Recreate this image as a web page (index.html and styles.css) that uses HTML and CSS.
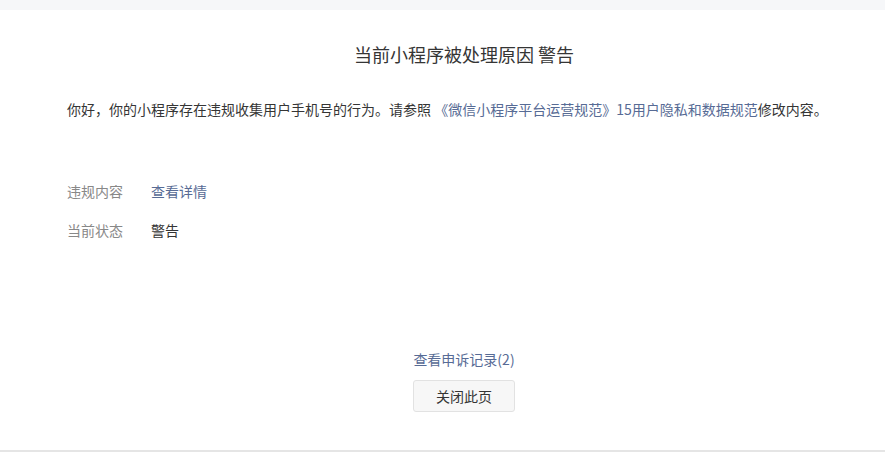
FILE: index.html
```html
<!DOCTYPE html>
<html lang="zh-CN">
<head>
<meta charset="utf-8">
<link rel="stylesheet" href="styles.css">
</head>
<body>
<div class="topband"></div>
<main class="page">
  <h1 class="title">当前小程序被处理原因 警告</h1>
  <p class="desc">你好，你的小程序存在违规收集用户手机号的行为。请参照 <a class="link">《微信小程序平台运营规范》15用户隐私和数据规范</a>修改内容。</p>
  <dl class="info">
    <div class="row"><dt>违规内容</dt><dd><a class="link">查看详情</a></dd></div>
    <div class="row"><dt>当前状态</dt><dd>警告</dd></div>
  </dl>
  <div class="actions">
    <a class="link">查看申诉记录(2)</a>
    <button class="btn">关闭此页</button>
  </div>
</main>
</body>
</html>
```
FILE: styles.css
```css
html, body {
  margin: 0;
  padding: 0;
  background: #ffffff;
}
body {
  font-family: "Noto Sans CJK SC", "Noto Sans", sans-serif;
  color: #353535;
  font-size: 14px;
  width: 885px;
  height: 452px;
  overflow: hidden;
}
.topband {
  height: 10px;
  background: #f6f7f9;
}
.page {
  height: 442px;
  box-sizing: border-box;
  border-bottom: 2px solid #e5e5e5;
  padding: 0 24px 0 67px;
  display: flex;
  flex-direction: column;
}
.title {
  margin: 31px 0 0;
  font-size: 18px;
  font-weight: normal;
  line-height: 26px;
  text-align: center;
  color: #353535;
}
.desc {
  margin: 31px 0 0;
  line-height: 22px;
  white-space: nowrap;
}
.link {
  color: #576b95;
  text-decoration: none;
}
.info {
  margin: 60px 0 0;
}
.row {
  display: flex;
  line-height: 22px;
  margin-bottom: 17px;
}
.row dt {
  width: 84px;
  color: #888888;
}
.row dd {
  margin: 0;
}
.actions {
  margin-top: 91px;
  display: flex;
  flex-direction: column;
  align-items: center;
  gap: 11px;
}
.btn {
  width: 102px;
  height: 32px;
  font-family: inherit;
  font-size: 14px;
  color: #353535;
  background: #f7f7f7;
  border: 1px solid #e2e2e2;
  border-radius: 3px;
  padding: 0;
}
```
